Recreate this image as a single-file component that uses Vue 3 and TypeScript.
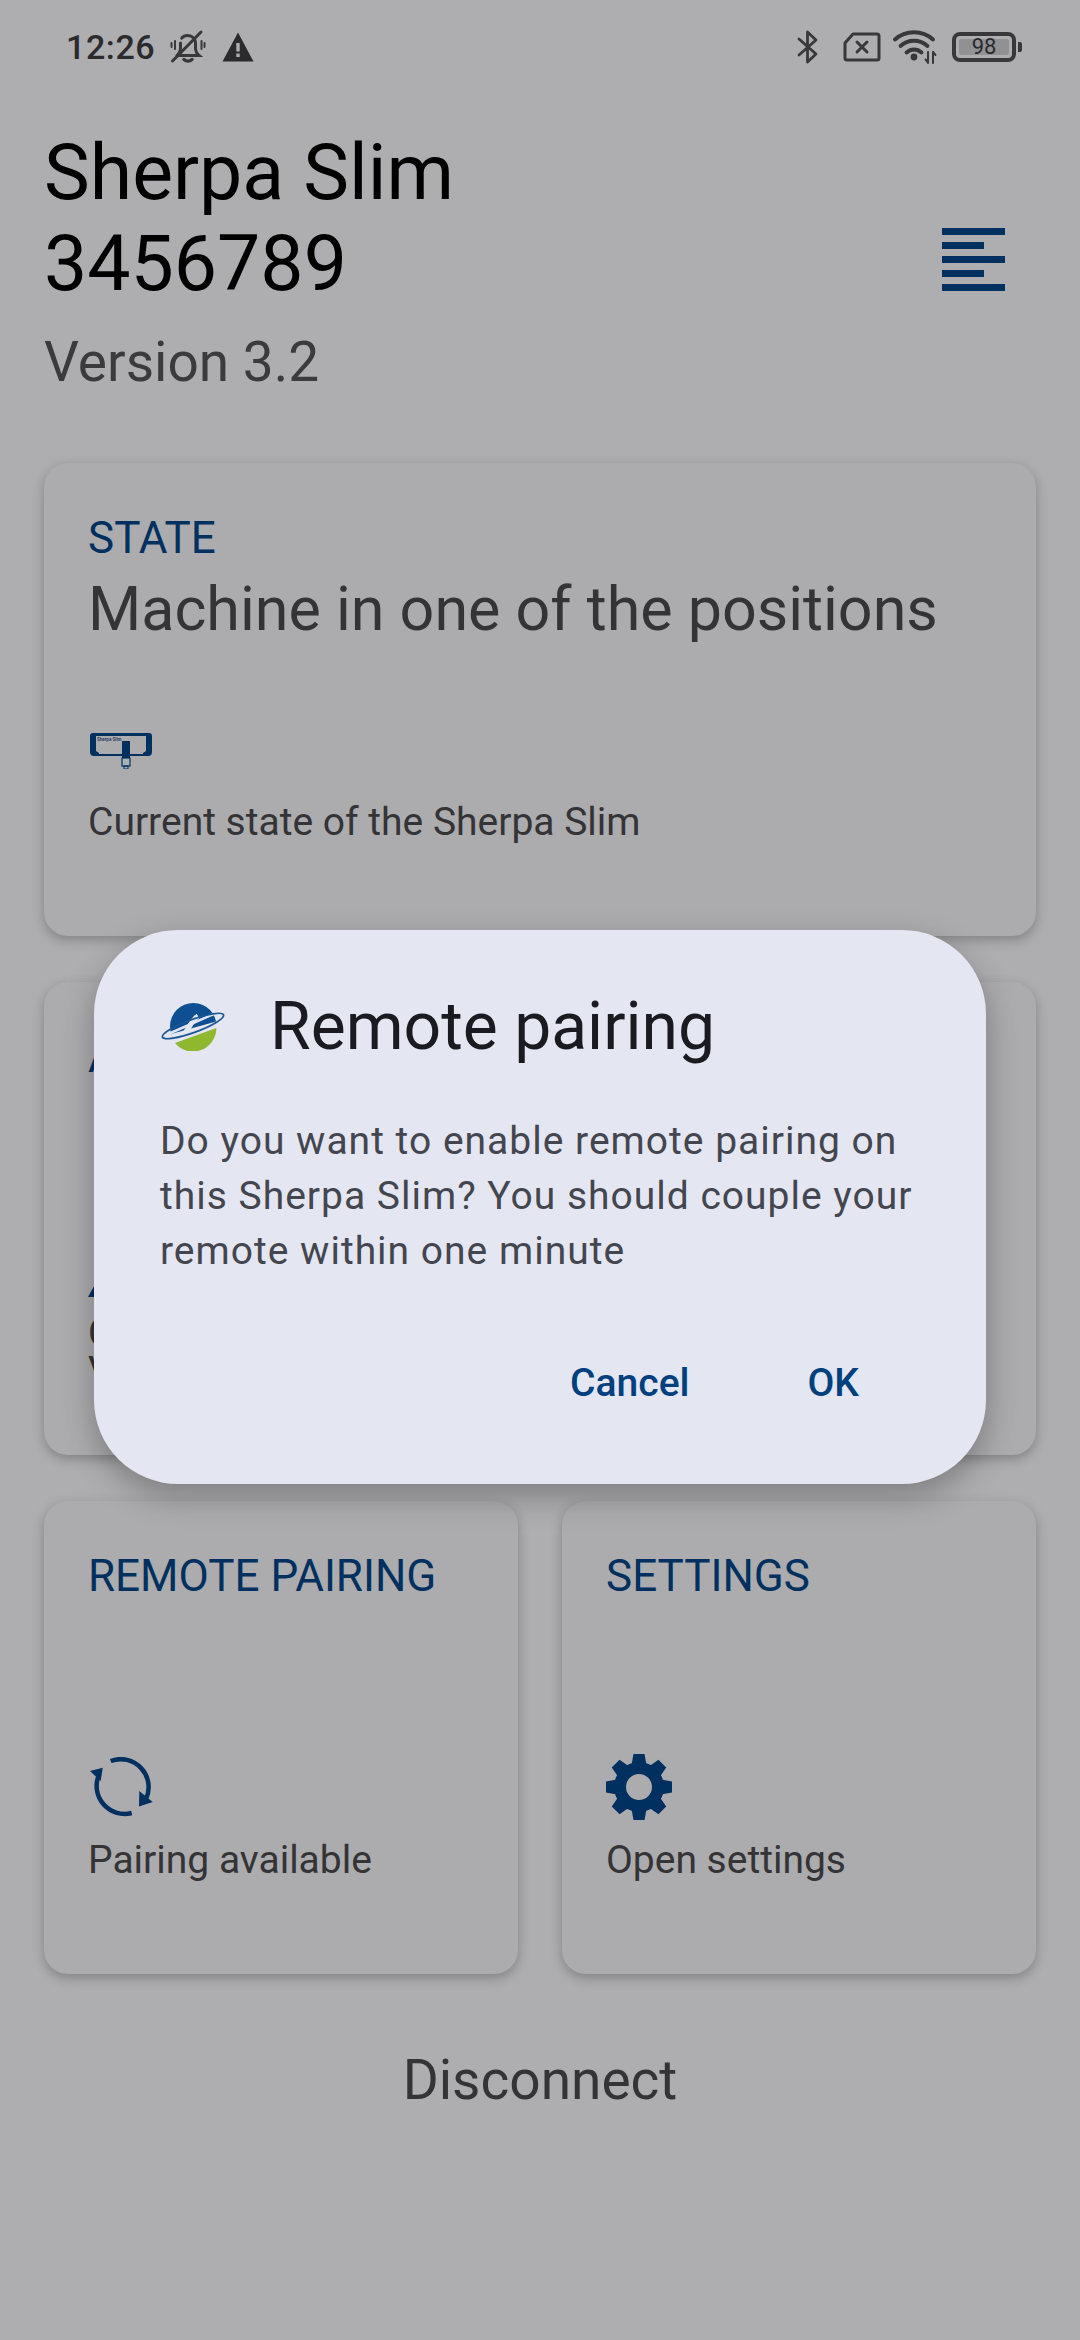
<script setup lang="ts">
const gearTeeth = [0, 45, 90, 135, 180, 225, 270, 315]
</script>

<template>
  <div class="page">
    <div class="status">
      <div class="status-left">
        <span class="time">12:26</span>
        <svg class="bell" width="36" height="36" viewBox="0 0 36 36" fill="none" stroke="#38373a" stroke-width="3" stroke-linecap="round">
          <path d="M7 26.500h22c-2.500-2-3.500-4.500-3.500-8v-4c0-4.500-3-8-8-8-2.500 0-4.500 1-5.800 2.700M10.500 14v4.500c0 3.200-1 5.800-3.500 8" />
          <path d="M14 30.500c2.200 2 5.800 2 8 0" stroke-width="3.400" />
          <path d="M5 12v8M1.500 14v4M31.500 12v8M34.500 14v4" stroke-width="2" />
          <path d="M2.500 32 31 3" />
        </svg>
        <svg class="warn" width="32" height="30" viewBox="0 0 32 30">
          <path fill="#2b2a2d" fill-rule="evenodd" d="M16 .5 31.500 29.500H.5ZM14.300 11v8.500h3.400V11ZM14.300 21.500v3.600h3.400v-3.600Z" />
        </svg>
      </div>
      <div class="status-right">
        <svg width="22" height="34" viewBox="0 0 22 34" fill="none" stroke="#38373a" stroke-width="2.800" stroke-linejoin="round" stroke-linecap="round">
          <path d="M2 9 19 24 10.500 32V2L19 10 2 25" />
        </svg>
        <svg class="sim" width="38" height="30" viewBox="0 0 38 30" fill="none" stroke="#38373a" stroke-width="3" stroke-linejoin="round">
          <path d="M10 2h24a2 2 0 0 1 2 2v22a2 2 0 0 1-2 2H4a2 2 0 0 1-2-2V11Z" />
          <path d="M14 10l10 10M24 10 14 20" stroke-linecap="round" />
        </svg>
        <svg class="wifi" width="44" height="36" viewBox="0 0 44 36" fill="none" stroke="#38373a" stroke-width="3.800" stroke-linecap="round">
          <path d="M2 10.500C12.500 .8 29.500 .8 40 10.500" />
          <path d="M7.500 17C15 10 27 10 34.500 17" />
          <path d="M13.500 23.500c4.500-4 10.500-4 15 0" />
          <circle cx="21" cy="28" r="3.400" fill="#38373a" stroke="none" />
          <path d="M35 23v11M40 23v11M32.500 30.500l2.500 3M42.500 26l-2.500-3" stroke-width="2" />
        </svg>
        <div class="battery">
          <div class="battery-body"><span class="battery-fill">98</span></div>
          <span class="battery-nub"></span>
        </div>
      </div>
    </div>

    <header class="head">
      <div>
        <h1 class="title">Sherpa Slim<br />3456789</h1>
        <p class="version">Version 3.2</p>
      </div>
      <svg class="menu" width="63" height="63" viewBox="0 0 63 63" fill="#00305f">
        <rect x="0" y="0" width="63" height="7" />
        <rect x="0" y="14" width="42" height="7" />
        <rect x="0" y="28" width="63" height="7" />
        <rect x="0" y="42" width="42" height="7" />
        <rect x="0" y="56" width="63" height="7" />
      </svg>
    </header>

    <main class="grid">
      <section class="card wide">
        <h2 class="label">STATE</h2>
        <p class="state">Machine in one of the positions</p>
        <svg class="ico machine" width="64" height="36" viewBox="0 0 64 36">
          <path fill="#00305f" fill-rule="evenodd" d="M3 0h56a3 3 0 0 1 3 3v16a4 4 0 0 1-4 4H4a4 4 0 0 1-4-4V3a3 3 0 0 1 3-3ZM6 3v15l3 2v1h44v-1l3-2V3Z" />
          <text x="7" y="7.500" font-size="4.500" font-weight="700" fill="#2c3f66" font-family="Roboto, sans-serif">Sherpa Slim</text>
          <rect x="32" y="8" width="8" height="19" fill="#00305f" />
          <rect x="32" y="25" width="8" height="8" fill="#a9b2b4" stroke="#00305f" stroke-width="1.200" />
          <rect x="34" y="33" width="4" height="3" fill="none" stroke="#00305f" stroke-width="1" />
        </svg>
        <p class="desc">Current state of the Sherpa Slim</p>
      </section>

      <section class="card wide">
        <h2 class="label">ALERTS</h2>
        <svg class="ico alert-ico" width="40" height="36" viewBox="0 0 40 36">
          <path fill="#00305f" d="M20 0 40 36H0Z" />
        </svg>
        <p class="desc two">Check the warnings<br />Visit settings</p>
      </section>

      <section class="card">
        <h2 class="label">REMOTE PAIRING</h2>
        <svg class="ico sync" width="64" height="60" viewBox="0 0 64 60" fill="none">
          <path stroke="#00305f" stroke-width="4.500" d="M20.700 4A28 28 0 0 1 56 42" />
          <path fill="#00305f" d="M49.300 34 62.700 45 49 49.500Z" />
          <path stroke="#00305f" stroke-width="4.500" d="M41.700 56A28 28 0 0 1 9.300 17" />
          <path fill="#00305f" d="M0 14 12.700 10.700 10.700 24Z" />
        </svg>
        <p class="desc">Pairing available</p>
      </section>

      <section class="card">
        <h2 class="label">SETTINGS</h2>
        <svg class="ico gear" width="66" height="66" viewBox="-33 -33 66 66">
          <g fill="#00305f">
            <path v-for="a in gearTeeth" :key="a" d="M-5.500-33h11l2 11h-15Z" :transform="`rotate(${a})`" />
            <path fill-rule="evenodd" d="M0-25A25 25 0 1 1 0 25 25 25 0 1 1 0-25ZM0-13A13 13 0 1 0 0 13 13 13 0 1 0 0-13Z" />
          </g>
        </svg>
        <p class="desc">Open settings</p>
      </section>
    </main>

    <button class="disconnect" type="button">Disconnect</button>

    <div class="dialog" role="dialog">
      <div class="dialog-head">
        <svg class="logo" width="66" height="50" viewBox="0 0 66 50">
          <circle cx="33.300" cy="25.300" r="23.300" fill="#0d4f92" />
          <path d="M11 33 58 20 56.600 30A23.300 23.300 0 0 1 14 39Z" fill="#e4e6f1" />
          <path d="M15 42 56.300 27A23.300 23.300 0 0 1 15 42Z" fill="#8fb82f" />
          <path d="M6 34 56 12" stroke="#dfe6f1" stroke-width="2.500" fill="none" />
          <path d="M38 15C31 19 30 28 20 38" stroke="#e4e6f1" stroke-width="5" fill="none" />
          <ellipse cx="33" cy="25" rx="32.500" ry="6.500" transform="rotate(-20 33 25)" fill="none" stroke="#1a5596" stroke-width="1.700" />
        </svg>
        <h3 class="dialog-title">Remote pairing</h3>
      </div>
      <p class="dialog-body">Do you want to enable remote pairing on this Sherpa Slim? You should couple your remote within one minute</p>
      <div class="dialog-actions">
        <button type="button" class="act">Cancel</button>
        <button type="button" class="act">OK</button>
      </div>
    </div>
  </div>
</template>

<style>
html, body { margin: 0; background: #aeadb0; }
</style>

<style scoped>
* { box-sizing: border-box; }
.page {
  position: relative;
  width: 1080px;
  height: 2340px;
  padding: 0 44px;
  overflow: hidden;
  background: #aeadb0;
  font-family: Roboto, sans-serif;
  color: #343336;
}
.status {
  height: 94px;
  padding: 0 16px 0 22px;
  display: flex;
  justify-content: space-between;
  align-items: center;
}
.status-left, .status-right { display: flex; align-items: center; }
.time { font-size: 34px; font-weight: 500; color: #2b2a2d; letter-spacing: .6px; width: 104px; }
.warn { margin-left: 16px; }
.status-right { margin-right: -2px; }
.sim { margin-left: 24px; }
.wifi { margin-left: 12px; }
.battery { display: flex; align-items: center; margin-left: 15px; }
.battery-body {
  width: 64px; height: 30px;
  border: 4px solid #38373a;
  border-radius: 8px;
  padding: 3px;
  display: flex;
}
.battery-fill {
  flex: 1;
  background: #919093;
  border-radius: 2px;
  font-size: 22px;
  line-height: 16px;
  text-align: center;
  color: #2b2a2d;
}
.battery-nub { width: 4px; height: 10px; margin-left: 2px; background: #38373a; border-radius: 0 2px 2px 0; }
.head { display: flex; justify-content: space-between; padding-right: 31px; height: 369px; align-items: flex-start; }
.title { margin: 0; font-size: 77px; font-weight: 400; line-height: 91px; color: #000; padding-top: 34px; }
.version { margin: 22px 0 0; font-size: 55px; line-height: 60px; color: #3b3a3d; }
.menu { margin-top: 134px; }
.grid {
  display: grid;
  grid-template-columns: 474px 474px;
  grid-auto-rows: 473px;
  gap: 46px 44px;
}
.card {
  background: #acabae;
  border-radius: 24px;
  padding: 50px 44px 0;
  box-shadow: 0 4px 12px rgba(0, 0, 0, .25);
  display: flex;
  flex-direction: column;
  position: relative;
}
.wide { grid-column: 1 / 3; }
.label { margin: 0; font-size: 44px; line-height: 50px; font-weight: 400; color: #00305f; }
.state { margin: 11px 0 0; font-size: 61px; line-height: 70px; color: #343336; }
.ico { display: block; position: absolute; left: 44px; }
.machine { top: 270px; left: 46px; }
.alert-ico { top: 279px; }
.sync { top: 256px; left: 46px; }
.gear { top: 253px; }
.desc { position: absolute; left: 44px; top: 337px; margin: 0; font-size: 39px; line-height: 45px; color: #343336; white-space: nowrap; }
.desc.two { top: 332px; line-height: 38px; }
.disconnect {
  display: block;
  width: 100%;
  margin-top: 76px;
  border: 0;
  background: none;
  font: 400 55px/60px Roboto, sans-serif;
  color: #343336;
  text-align: center;
  padding: 0;
}
.dialog {
  position: absolute;
  left: 94px; top: 930px;
  width: 892px; height: 554px;
  background: #e4e6f1;
  border-radius: 84px;
  padding: 64px 66px 0;
  box-shadow: 0 12px 32px rgba(0, 0, 0, .28);
}
.dialog-head { display: flex; align-items: center; height: 66px; }
.logo { flex: none; margin-top: -2px; }
.dialog-title { margin: 0 0 0 44px; font-size: 66px; line-height: 66px; font-weight: 400; color: #1a1b20; }
.dialog-body { margin: 54px 0 0; font-size: 39px; line-height: 55px; letter-spacing: 1px; color: #44464f; width: 770px; }
.dialog-actions { display: flex; justify-content: flex-end; gap: 118px; margin-top: 79px; padding-right: 61px; }
.act { border: 0; background: none; padding: 0; font: 500 39px/50px Roboto, sans-serif; color: #00407f; }
</style>
